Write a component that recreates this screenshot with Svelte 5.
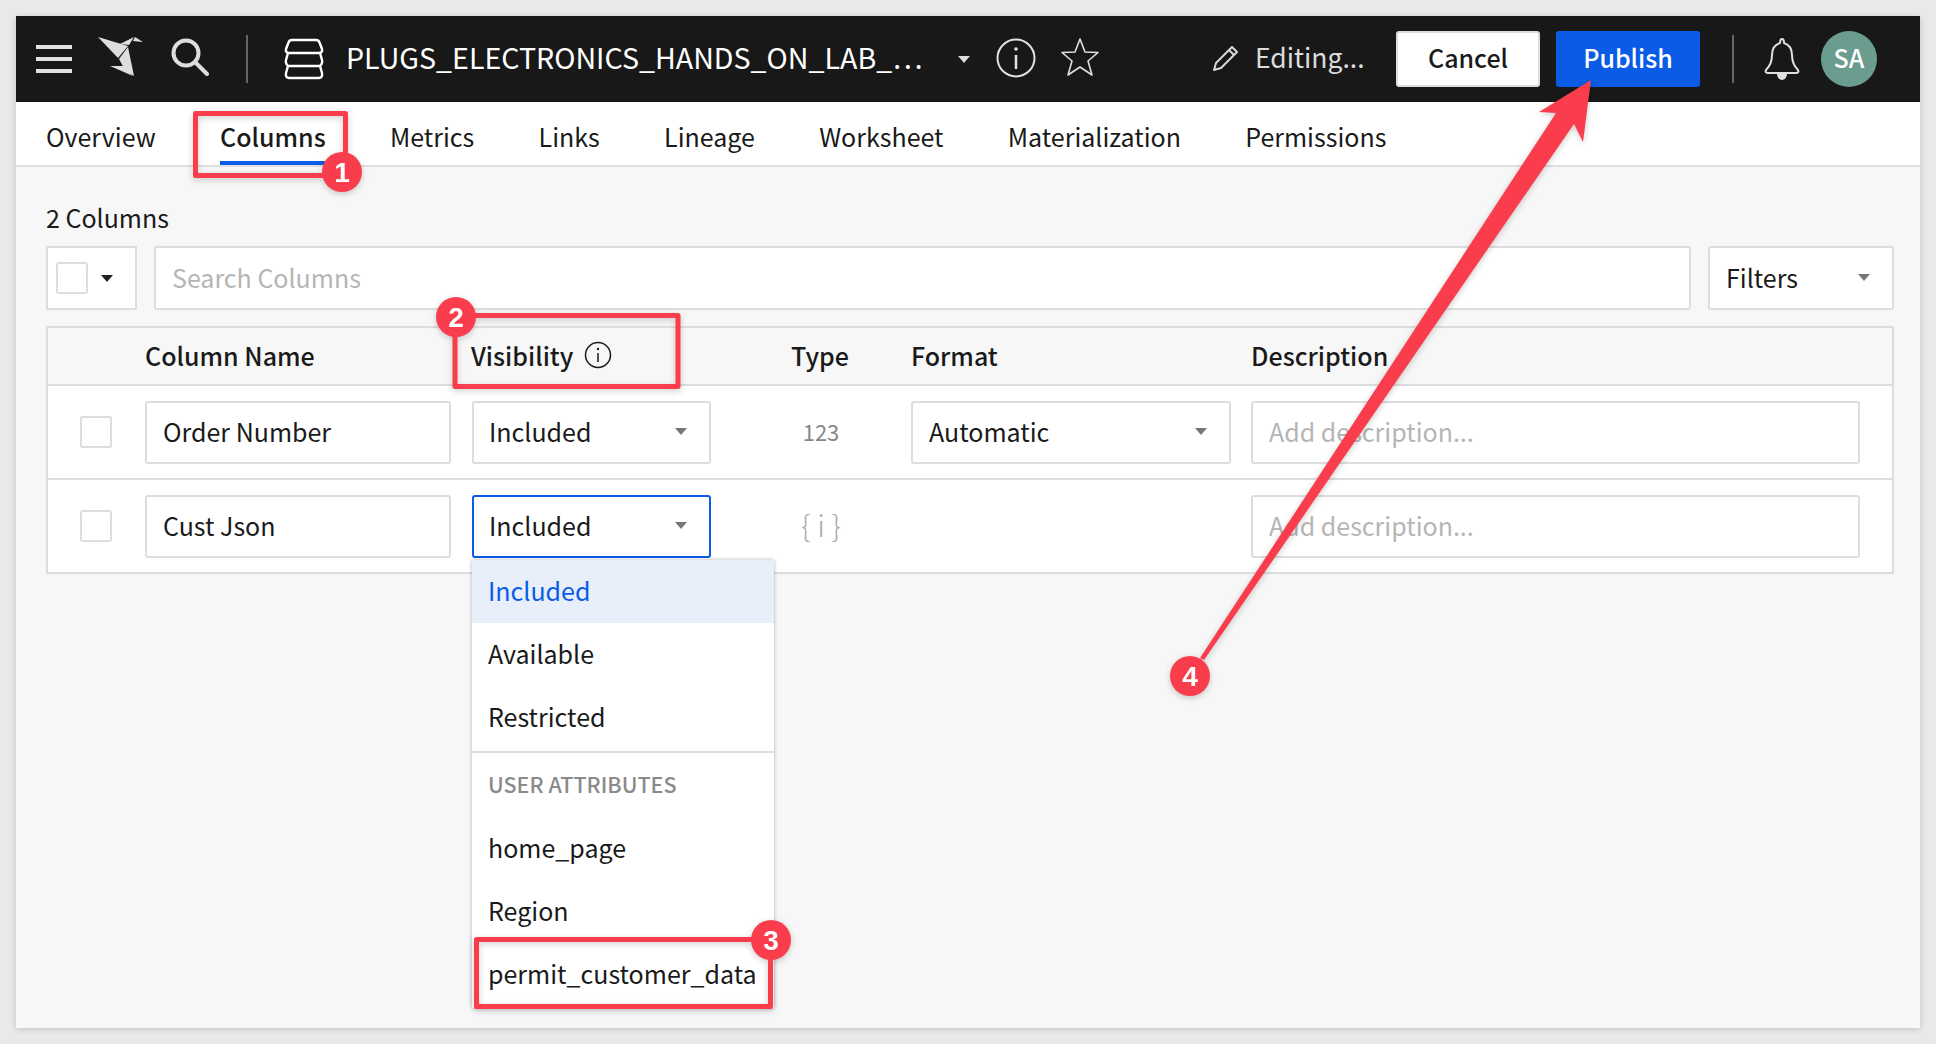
<script>
  const tabs = ['Overview', 'Columns', 'Metrics', 'Links', 'Lineage', 'Worksheet', 'Materialization', 'Permissions'];
  const options = ['Available', 'Restricted'];
  const attributes = ['home_page', 'Region', 'permit_customer_data'];
  const badges = [
    { n: 1, x: 342, y: 172 },
    { n: 2, x: 456, y: 317 },
    { n: 3, x: 771, y: 940 },
    { n: 4, x: 1190, y: 676 }
  ];
</script>

<div class="window">
  <header class="topbar">
    <svg class="hamburger" width="36" height="28" viewBox="0 0 36 28"><path d="M0 2h36M0 14h36M0 26h36" stroke="#e2e2e2" stroke-width="4" /></svg>
    <svg class="logo" width="46" height="40" viewBox="0 0 46 40" fill="#dedede">
      <path d="M0 0 30 9 20 21Z" />
      <path d="M21 22 30 10 36 39 27 33Z" />
      <path d="M22 7 36 0 31 8Z" />
      <path d="M37 0 45 5 35 4Z" />
      <path d="M12 29 25 29 35 39Z" />
    </svg>
    <svg class="search" width="38" height="38" viewBox="0 0 38 38" fill="none" stroke="#dedede" stroke-width="4" stroke-linecap="round"><circle cx="15" cy="15" r="12.5" /><path d="M24 24 36 36" /></svg>
    <span class="vline first"></span>
    <svg class="db" width="40" height="42" viewBox="0 0 40 42" fill="none" stroke="#fff" stroke-width="2.4" stroke-linejoin="round"><path d="M8 2h24c2 0 3 1 3.500 2.500L38 11c.6 2-.5 4-3 4H5c-2.500 0-3.600-2-3-4L4.500 4.500C5 3 6 2 8 2Z" /><path d="M4 15 2 22c-.6 2 .5 6 3 6h30c2.500 0 3.600-4 3-6l-2-7" /><path d="M4 28 2 35c-.6 3 .5 5 3 5h30c2.500 0 3.600-2 3-5l-2-7" /></svg>
    <span class="title">PLUGS_ELECTRONICS_HANDS_ON_LAB_…</span>
    <span class="caret white title-caret"></span>
    <svg class="info" width="40" height="40" viewBox="0 0 40 40" fill="none" stroke="#e0e0e0" stroke-width="2"><circle cx="20" cy="20" r="18.500" /><path d="M20 17v14" stroke-width="2.500" /><circle cx="20" cy="11" r="1.800" fill="#e0e0e0" stroke="none" /></svg>
    <svg class="star" width="38" height="40" viewBox="0 0 38 40" fill="none" stroke="#e0e0e0" stroke-width="1.600" stroke-linejoin="round"><path d="M19 2 24 15 37 15.500 27 24 31 38 19 30 7 38 11 24 1 15.500 14 15Z" /></svg>
    <svg class="pencil" width="28" height="28" viewBox="0 0 28 28" fill="none" stroke="#d8d8d8" stroke-width="2" stroke-linejoin="round"><path d="M20 3 25 8 9 24 2 26 4 19Z" /><path d="M17 6 22 11" /></svg>
    <span class="editing">Editing...</span>
    <button class="btn cancel">Cancel</button>
    <button class="btn publish">Publish</button>
    <span class="vline second"></span>
    <svg class="bell" width="36" height="42" viewBox="0 0 36 42" fill="none" stroke="#e0e0e0" stroke-width="2" stroke-linejoin="round"><path d="M18 1c-1.500 0-2 1.500-2 4C10 7 8 11 8 17c0 7-2 11-6 15-1 1.500 0 3 1.500 3h29c1.500 0 2.500-1.500 1.500-3-4-4-6-8-6-15 0-6-2-10-8-12 0-2.500-.5-4-2-4Z" /><path d="M14 36c0 3 2 5 4 5s4-2 4-5" fill="#e0e0e0" /></svg>
    <span class="avatar">SA</span>
  </header>

  <nav class="tabs">
    {#each tabs as tab}
      <span class="tab" class:active={tab === 'Columns'}>{tab}</span>
    {/each}
  </nav>

  <main class="content">
    <div class="count">2 Columns</div>

    <div class="toolbar">
      <div class="select-all">
        <span class="check"></span>
        <span class="caret dark"></span>
      </div>
      <div class="field search-field placeholder">Search Columns</div>
      <div class="field select filters">Filters <span class="caret"></span></div>
    </div>

    <div class="table">
      <div class="row head">
        <span></span>
        <span>Column Name</span>
        <span class="vis-head">Visibility
          <svg width="28" height="28" viewBox="0 0 28 28" fill="none" stroke="#1a1a1a" stroke-width="1.500"><circle cx="14" cy="14" r="12.500" /><path d="M14 12v9" /><circle cx="14" cy="8" r="1.200" fill="#1a1a1a" stroke="none" /></svg>
        </span>
        <span class="type-head">Type</span>
        <span>Format</span>
        <span>Description</span>
      </div>

      <div class="row">
        <span class="check"></span>
        <div class="field">Order Number</div>
        <div class="field select">Included <span class="caret"></span></div>
        <span class="type num">123</span>
        <div class="field select format">Automatic <span class="caret"></span></div>
        <div class="field placeholder">Add description...</div>
      </div>

      <div class="row last">
        <span class="check"></span>
        <div class="field">Cust Json</div>
        <div class="vis-cell">
          <div class="field select focused">Included <span class="caret"></span></div>
          <div class="menu">
            <div class="item selected">Included</div>
            {#each options as opt}
              <div class="item">{opt}</div>
            {/each}
            <div class="divider"></div>
            <div class="group">USER ATTRIBUTES</div>
            {#each attributes as attr}
              <div class="item">{attr}</div>
            {/each}
          </div>
        </div>
        <span class="type obj">{'{ i }'}</span>
        <span></span>
        <div class="field placeholder">Add description...</div>
      </div>
    </div>
  </main>

  <!-- callouts drawn on top of the screenshot -->
  <svg class="marks" width="1936" height="1044" viewBox="0 0 1936 1044">
    <g fill="none" stroke="#fa3d4c" stroke-width="5" stroke-linejoin="round">
      <rect x="195.500" y="113.500" width="150" height="62" />
      <rect x="455" y="315.500" width="223" height="71" />
      <rect x="476.500" y="939.500" width="294" height="67" />
    </g>
    <polygon fill="#fa3d4c" points="1591,80 1583,142 1574,124 1204,660 1200,658 1556,113 1539,112" />
    {#each badges as b}
      <circle cx={b.x} cy={b.y} r="20" fill="#fa3d4c" />
      <text x={b.x} y={b.y + 10} text-anchor="middle" class="badge-num">{b.n}</text>
    {/each}
  </svg>
</div>

<style>
  :global(body) {
    margin: 0;
    background: #e9e9e9;
  }

  .window {
    position: relative;
    box-sizing: border-box;
    width: 1904px;
    height: 1012px;
    margin: 16px;
    background: #f7f7f7;
    box-shadow: 0 1px 6px rgba(0, 0, 0, 0.18);
    font-family: "Noto Sans CJK SC", "Noto Sans", sans-serif;
    font-size: 25px;
    color: #1a1a1a;
  }

  .topbar {
    display: flex;
    align-items: center;
    height: 86px;
    background: #181818;
    color: #fff;
  }

  .topbar svg {
    flex: none;
  }

  .hamburger { margin-left: 20px; }
  .logo { margin-left: 26px; margin-top: -4px; }
  .search { margin-left: 27px; margin-top: -4px; }

  .vline {
    flex: none;
    width: 2px;
    height: 48px;
    background: #666;
  }

  .vline.first { margin-left: 37px; }
  .vline.second { margin-left: 32px; }

  .db { margin-left: 36px; }

  .title {
    width: 592px;
    margin-left: 22px;
    padding-bottom: 6px;
    font-size: 28.600px;
    white-space: nowrap;
  }

  .caret {
    display: inline-block;
    flex: none;
    width: 0;
    height: 0;
    border-left: 6.500px solid transparent;
    border-right: 6.500px solid transparent;
    border-top: 7px solid #777;
  }

  .caret.white { border-top-color: #ddd; }
  .caret.dark { border-top-color: #222; }

  .title-caret { margin-left: 20px; }
  .info { margin-left: 26px; margin-top: -2px; }
  .star { margin-left: 25px; margin-top: -4px; }
  .pencil { margin-left: 113px; margin-top: -2px; }

  .editing {
    width: 141px;
    margin-left: 15px;
    padding-bottom: 6px;
    color: #dcdcdc;
    font-size: 26.500px;
    white-space: nowrap;
  }

  .btn {
    flex: none;
    box-sizing: border-box;
    width: 144px;
    height: 56px;
    border: 0;
    border-radius: 3px;
    padding: 0 0 4px;
    font: inherit;
    font-weight: 500;
    font-size: 25px;
  }

  .cancel {
    background: #fff;
    color: #1a1a1a;
    border: 2px solid #ddd;
  }

  .publish {
    margin-left: 16px;
    background: #0a5ce6;
    color: #fff;
  }

  .bell { margin-left: 30px; }

  .avatar {
    display: flex;
    flex: none;
    align-items: center;
    justify-content: center;
    box-sizing: border-box;
    width: 56px;
    height: 56px;
    margin-left: 21px;
    padding-bottom: 4px;
    border-radius: 50%;
    background: #6a9c90;
    color: #fff;
    font-size: 25px;
    font-weight: 500;
  }

  .tabs {
    display: flex;
    gap: 64.300px;
    box-sizing: border-box;
    height: 65px;
    padding: 0 30px;
    background: #fff;
    border-bottom: 2px solid #ddd;
  }

  .tab {
    box-sizing: border-box;
    height: 63px;
    padding-top: 8px;
    line-height: 52px;
    border-bottom: 4px solid transparent;
  }

  .tab.active {
    font-weight: 500;
    border-bottom-color: #0a5ce6;
  }

  .content {
    padding: 0 26px 0 30px;
  }

  .count {
    height: 79px;
    padding-top: 32px;
    box-sizing: border-box;
    line-height: 36px;
  }

  .toolbar {
    display: flex;
    gap: 17px;
    height: 64px;
    margin-bottom: 16px;
  }

  .select-all {
    display: flex;
    align-items: center;
    gap: 13px;
    box-sizing: border-box;
    width: 91px;
    padding-left: 8px;
    background: #fff;
    border: 2px solid #ddd;
  }

  .check {
    display: block;
    box-sizing: border-box;
    width: 32px;
    height: 32px;
    background: #fff;
    border: 2px solid #ddd;
    border-radius: 3px;
  }

  .field {
    display: flex;
    align-items: center;
    box-sizing: border-box;
    height: 63px;
    padding: 0 16px 2px;
    background: #fff;
    border: 2px solid #ddd;
    border-radius: 3px;
    white-space: nowrap;
  }

  .placeholder { color: #b5b5b5; }

  .search-field {
    flex: 1;
    height: 64px;
  }

  .filters {
    width: 186px;
    height: 64px;
  }

  .select {
    justify-content: space-between;
    padding-left: 15px;
    padding-right: 22px;
  }

  .filters.select { padding-left: 16px; }
  .format.select { padding-left: 16px; }

  .format { width: 320px; }

  .focused {
    border-color: #0a5ce6;
  }

  .table {
    box-sizing: border-box;
    height: 248px;
    background: #fff;
    border: 2px solid #ddd;
  }

  .row {
    display: grid;
    grid-template-columns: 97px 327px 239px 200px 340px 609px;
    align-items: center;
    box-sizing: border-box;
    height: 94px;
    border-bottom: 2px solid #ddd;
  }

  .row > .check { margin-left: 32px; }
  .row > .field:nth-child(2) { width: 306px; }

  .row.last {
    height: 92px;
    border-bottom: 0;
  }

  .row.head {
    height: 58px;
    padding-bottom: 2px;
    background: #f7f7f7;
    font-weight: 500;
  }

  .vis-head {
    display: flex;
    align-items: center;
    gap: 11px;
    margin-left: -1px;
  }

  .type-head { padding-left: 80px; }

  .type {
    width: 60px;
    margin-left: 80px;
    padding-bottom: 2px;
    text-align: center;
    color: #888;
    font-size: 22px;
  }

  .type.obj {
    padding-bottom: 5px;
    color: #aaa;
    font-size: 30px;
    font-weight: 300;
    white-space: nowrap;
  }

  .vis-cell {
    position: relative;
  }

  .menu {
    position: absolute;
    z-index: 2;
    top: 65px;
    left: 0;
    box-sizing: border-box;
    width: 302px;
    height: 448px;
    background: #fff;
    box-shadow: 0 0 4px rgba(0, 0, 0, 0.3);
  }

  .item {
    height: 63px;
    padding: 0 16px;
    line-height: 61px;
    white-space: nowrap;
  }

  .item.selected {
    background: #e8eefa;
    color: #0a5ce6;
  }

  .divider {
    height: 2px;
    margin-top: 2px;
    background: #ddd;
  }

  .group {
    height: 64px;
    padding: 0 16px;
    line-height: 62px;
    color: #8a8a8a;
    font-size: 21.500px;
    font-weight: 500;
  }

  .marks {
    position: absolute;
    z-index: 3;
    top: -16px;
    left: -16px;
    pointer-events: none;
    filter: drop-shadow(0 2px 3px rgba(0, 0, 0, 0.2));
  }

  .badge-num {
    fill: #fff;
    font-family: "Liberation Sans", sans-serif;
    font-size: 28px;
    font-weight: 700;
  }
</style>
